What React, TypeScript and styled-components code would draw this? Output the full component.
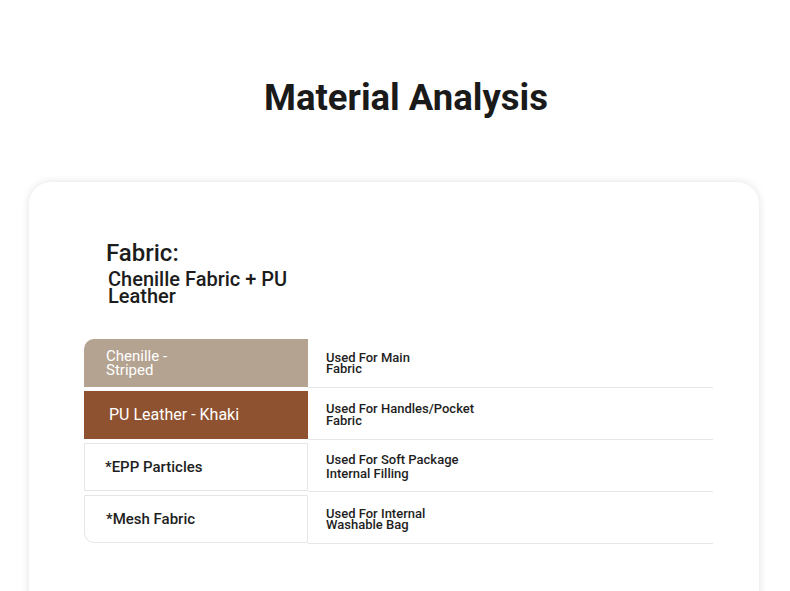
import styled, { createGlobalStyle } from "styled-components";

const GlobalStyle = createGlobalStyle`
  html, body {
    margin: 0;
    padding: 0;
    background: #ffffff;
    font-family: Roboto, "Liberation Sans", Arial, sans-serif;
  }
`;

interface MaterialRow {
  name: string;
  use: string;
  nameWidth?: number;
  useWidth: number;
  useLine: number;
  variant: "tan" | "brown" | "plain";
  namePad: number;
  nameSize: number;
  nameLine: number;
}

// Filas de la tabla de materiales
const rows: MaterialRow[] = [
  { name: "Chenille - Striped", use: "Used For Main Fabric", nameWidth: 90, useWidth: 100, useLine: 11, variant: "tan", namePad: 22, nameSize: 15, nameLine: 14 },
  { name: "PU Leather - Khaki", use: "Used For Handles/Pocket Fabric", useWidth: 160, useLine: 12, variant: "brown", namePad: 25, nameSize: 16, nameLine: 18 },
  { name: "*EPP Particles", use: "Used For Soft Package Internal Filling", useWidth: 145, useLine: 14, variant: "plain", namePad: 20, nameSize: 15, nameLine: 18 },
  { name: "*Mesh Fabric", use: "Used For Internal Washable Bag", useWidth: 110, useLine: 11, variant: "plain", namePad: 21, nameSize: 15, nameLine: 18 },
];

export default function App() {
  return (
    <Page>
      <GlobalStyle />
      <Title>Material Analysis</Title>
      <Card>
        <FabricBlock>
          <FabricLabel>Fabric:</FabricLabel>
          <FabricValue>Chenille Fabric + PU Leather</FabricValue>
        </FabricBlock>
        <Table>
          {rows.map((row, i) => (
            <Row key={row.name}>
              <NameCell
                $variant={row.variant}
                $first={i === 0}
                $last={i === rows.length - 1}
                $pad={row.namePad}
              >
                <NameText
                  $size={row.nameSize}
                  $line={row.nameLine}
                  $maxW={row.nameWidth}
                  $medium={row.variant === "plain"}
                >
                  {row.name}
                </NameText>
              </NameCell>
              <UseCell>
                <UseText $line={row.useLine} $maxW={row.useWidth}>
                  {row.use}
                </UseText>
              </UseCell>
            </Row>
          ))}
        </Table>
      </Card>
    </Page>
  );
}

const Page = styled.div`
  width: 790px;
  height: 591px;
  overflow: hidden;
  padding-top: 80px;
  box-sizing: border-box;
`;

const Title = styled.h1`
  margin: 0;
  text-align: center;
  font-size: 36.5px;
  line-height: 36px;
  font-weight: 700;
  color: #1a1a1a;
  padding-left: 22px;
`;

const Card = styled.div`
  margin: 66px 31px 0 29px;
  height: 460px;
  background: #ffffff;
  border-radius: 22px;
  box-shadow: 0 0 8px rgba(0, 0, 0, 0.12);
  padding: 57px 46px 0 55px;
  box-sizing: border-box;
`;

const FabricBlock = styled.div`
  margin-left: 22px;
  color: #1c1c1c;
`;

const FabricLabel = styled.div`
  font-size: 24px;
  line-height: 28px;
  font-weight: 500;
`;

const FabricValue = styled.div`
  margin: 4px 0 0 2px;
  max-width: 195px;
  font-size: 20px;
  line-height: 17px;
  font-weight: 500;
`;

const Table = styled.div`
  margin-top: 34px;
  display: flex;
  flex-direction: column;
  gap: 3px;
`;

const Row = styled.div`
  display: flex;
  height: 49px;
`;

const NameCell = styled.div<{ $variant: "tan" | "brown" | "plain"; $first: boolean; $last: boolean; $pad: number }>`
  width: 224px;
  height: 48px;
  box-sizing: border-box;
  display: flex;
  align-items: center;
  padding-left: ${(p) => p.$pad}px;
  background: ${(p) => (p.$variant === "tan" ? "#b4a391" : p.$variant === "brown" ? "#8f5230" : "#ffffff")};
  color: ${(p) => (p.$variant === "plain" ? "#1e1e1e" : "#ffffff")};
  border: ${(p) => (p.$variant === "plain" ? "1px solid #e6e6e6" : "none")};
  border-top-left-radius: ${(p) => (p.$first ? "10px" : "0")};
  border-bottom-left-radius: ${(p) => (p.$last ? "10px" : "0")};
`;

const NameText = styled.span<{ $size: number; $line: number; $maxW?: number; $medium: boolean }>`
  font-size: ${(p) => p.$size}px;
  line-height: ${(p) => p.$line}px;
  font-weight: ${(p) => (p.$medium ? 500 : 400)};
  max-width: ${(p) => (p.$maxW ? `${p.$maxW}px` : "none")};
`;

const UseCell = styled.div`
  flex: 1;
  display: flex;
  align-items: center;
  padding-left: 18px;
  border-bottom: 1px solid #e6e6e6;
  color: #1e1e1e;
`;

const UseText = styled.span<{ $line: number; $maxW: number }>`
  font-size: 13px;
  font-weight: 500;
  line-height: ${(p) => p.$line}px;
  max-width: ${(p) => p.$maxW}px;
`;
